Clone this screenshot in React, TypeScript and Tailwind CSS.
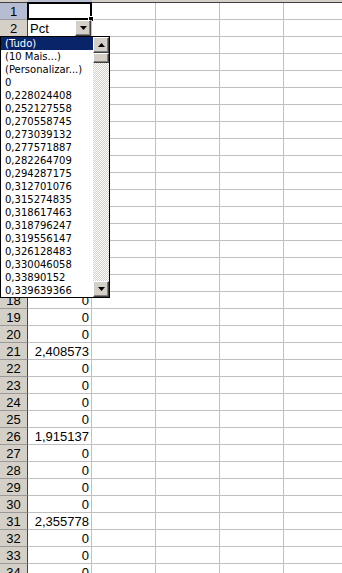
import type { JSX } from 'react';

const cellValues: Record<number, string> = {
  2: 'Pct',
  21: '2,408573',
  26: '1,915137',
  31: '2,355778',
};

const filterItems = [
  '(Tudo)',
  '(10 Mais...)',
  '(Personalizar...)',
  '0',
  '0,228024408',
  '0,252127558',
  '0,270558745',
  '0,273039132',
  '0,277571887',
  '0,282264709',
  '0,294287175',
  '0,312701076',
  '0,315274835',
  '0,318617463',
  '0,318796247',
  '0,319556147',
  '0,326128483',
  '0,330046058',
  '0,33890152',
  '0,339639366',
];

const rows = Array.from({ length: 34 }, (_, i) => i + 1);

const Arrow = ({ up }: { up?: boolean }): JSX.Element => (
  <svg width="7" height="4" viewBox="0 0 7 4" className="block">
    <path d={up ? 'M3.5 0 L7 4 L0 4 Z' : 'M0 0 L7 0 L3.5 4 Z'} fill="#000" />
  </svg>
);

const ScrollButton = ({ up }: { up?: boolean }): JSX.Element => (
  <div className="flex h-[16px] w-[16px] shrink-0 items-center justify-center border border-t-white border-l-white border-r-[#404040] border-b-[#404040] bg-[#d4d0c8] shadow-[inset_-1px_-1px_#808080]">
    <Arrow up={up} />
  </div>
);

const FilterList = (): JSX.Element => (
  <div className="absolute top-[36px] left-0 z-10 flex h-[262px] w-[110px] border border-black bg-white font-['DejaVu_Sans',Tahoma,sans-serif] text-[10px] leading-[13px] text-black">
    <div className="flex flex-1 flex-col overflow-hidden">
      {filterItems.map((item, i) => (
        <div
          key={item}
          className={`h-[13px] shrink-0 pl-[4px] whitespace-nowrap ${i === 0 ? 'bg-[#0a246a] text-white' : ''}`}
        >
          {item}
        </div>
      ))}
    </div>
    <div className="flex w-[16px] flex-col">
      <ScrollButton up />
      <div className="h-[10px] w-[16px] shrink-0 border border-t-white border-l-white border-r-[#404040] border-b-[#404040] bg-[#d4d0c8] shadow-[inset_-1px_-1px_#808080]" />
      <div className="flex-1 bg-[image:repeating-conic-gradient(#d4d0c8_0_25%,#ffffff_0_50%)] bg-size-[2px_2px]" />
      <ScrollButton />
    </div>
  </div>
);

export default function App(): JSX.Element {
  return (
    <div className="relative h-[573px] w-[342px] overflow-hidden bg-white font-['Liberation_Sans',Arial,sans-serif] text-[13px] text-black">
      {/* column header strip, mostly scrolled out */}
      <div className="flex h-[3px] border-b border-[#404040]">
        <div className="w-[28px] shrink-0 bg-[#d4d0c8]" />
        <div className="w-[64px] shrink-0 bg-[#b6bdd2]" />
        <div className="flex-1 bg-[#d4d0c8]" />
      </div>

      {rows.map((n) => {
        const value = cellValues[n] ?? (n === 1 ? '' : '0');
        const isText = n === 2;
        return (
          <div key={n} className="flex h-[17px]">
            <div
              className={`flex w-[28px] shrink-0 items-center justify-center border-r border-b border-r-[#404060] border-b-[#9a9a9a] leading-none ${
                n === 1 ? 'bg-[#b6bdd2]' : 'bg-[#d4d0c8]'
              }`}
            >
              {n}
            </div>
            <div
              className={`relative flex w-[64px] shrink-0 items-center border-r border-b border-[#c0c0c0] px-[2px] leading-none ${
                isText ? 'justify-start' : 'justify-end'
              }`}
            >
              {value}
              {n === 1 && (
                <div className="absolute -top-px -left-px h-[18px] w-[65px] border-2 border-black">
                  <div className="absolute -right-[4px] -bottom-[4px] h-[6px] w-[6px] border border-white bg-black" />
                </div>
              )}
              {n === 2 && (
                <div className="absolute top-0 right-0 flex h-[16px] w-[16px] items-center justify-center border border-t-white border-l-white border-r-[#404040] border-b-[#404040] bg-[#d4d0c8] shadow-[inset_-1px_-1px_#808080]">
                  <Arrow />
                </div>
              )}
            </div>
            {[0, 1, 2, 3].map((c) => (
              <div key={c} className="w-[64px] shrink-0 border-r border-b border-[#c0c0c0]" />
            ))}
          </div>
        );
      })}

      <FilterList />
    </div>
  );
}
